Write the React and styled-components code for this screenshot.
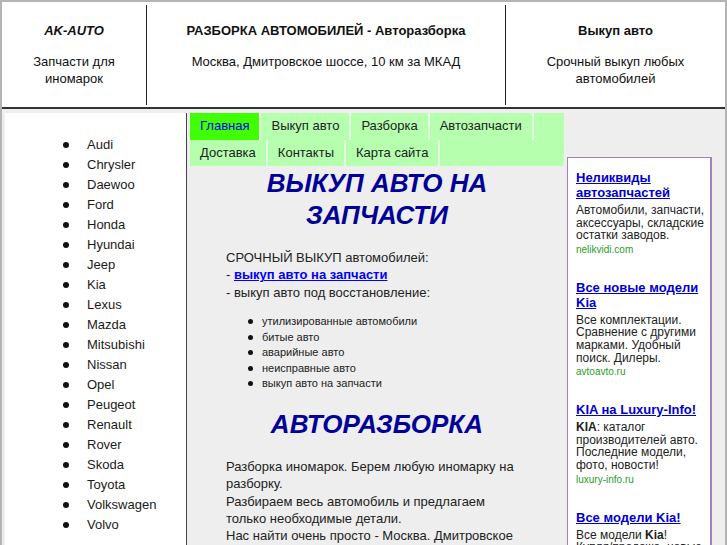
import React from "react";
import styled, { createGlobalStyle } from "styled-components";

const brands = [
    "Audi", "Chrysler", "Daewoo", "Ford", "Honda", "Hyundai", "Jeep", "Kia",
    "Lexus", "Mazda", "Mitsubishi", "Nissan", "Opel", "Peugeot", "Renault",
    "Rover", "Skoda", "Toyota", "Volkswagen", "Volvo",
];

const menu = [
    { title: "Главная", active: true },
    { title: "Выкуп авто" },
    { title: "Разборка" },
    { title: "Автозапчасти" },
    { title: "Доставка" },
    { title: "Контакты" },
    { title: "Карта сайта" },
];

const buyList = [
    "утилизированные автомобили",
    "битые авто",
    "аварийные авто",
    "неисправные авто",
    "выкуп авто на запчасти",
];

const App = () => {
    return (
        <>
            <GlobalStyle />
            <Page>
                <Header>
                    <HeaderCell>
                        <HeaderTitle $italic>AK-AUTO</HeaderTitle>
                        <HeaderText>Запчасти для<br />иномарок</HeaderText>
                    </HeaderCell>
                    <HeaderCell>
                        <HeaderTitle>РАЗБОРКА АВТОМОБИЛЕЙ - Авторазборка</HeaderTitle>
                        <HeaderText>Москва, Дмитровское шоссе, 10 км за МКАД</HeaderText>
                    </HeaderCell>
                    <HeaderCell $last>
                        <HeaderTitle>Выкуп авто</HeaderTitle>
                        <HeaderText>Срочный выкуп любых<br />автомобилей</HeaderText>
                    </HeaderCell>
                </Header>

                <Body>
                    <LeftCol>
                        <BrandList>
                            {brands.map((b) => (
                                <Brand key={b}>{b}</Brand>
                            ))}
                        </BrandList>
                    </LeftCol>

                    <Main>
                        <Nav>
                            {menu.map((m) => (
                                <NavItem key={m.title} $active={m.active}>{m.title}</NavItem>
                            ))}
                        </Nav>

                        <Heading $first>ВЫКУП АВТО НА ЗАПЧАСТИ</Heading>
                        <Content>
                            <Para>
                                СРОЧНЫЙ ВЫКУП автомобилей:<br />
                                - <MainLink href="#">выкуп авто на запчасти</MainLink><br />
                                - выкуп авто под восстановление:
                            </Para>
                            <SmallList>
                                {buyList.map((t) => (
                                    <SmallItem key={t}>{t}</SmallItem>
                                ))}
                            </SmallList>
                        </Content>

                        <Heading>АВТОРАЗБОРКА</Heading>
                        <Content>
                            <Para>
                                Разборка иномарок. Берем любую иномарку на разборку.<br />
                                Разбираем весь автомобиль и предлагаем только необходимые детали.<br />
                                Нас найти очень просто - Москва. Дмитровское шоссе, 10 км от МКАД.
                            </Para>
                        </Content>
                    </Main>

                    <Sidebar>
                        <AdBox>
                            <Ad>
                                <AdTitle href="#">Неликвиды автозапчастей</AdTitle>
                                <AdText>Автомобили, запчасти, аксессуары, складские остатки заводов.</AdText>
                                <AdUrl>nelikvidi.com</AdUrl>
                            </Ad>
                            <Ad>
                                <AdTitle href="#">Все новые модели Kia</AdTitle>
                                <AdText>Все комплектации. Сравнение с другими марками. Удобный поиск. Дилеры.</AdText>
                                <AdUrl>avtoavto.ru</AdUrl>
                            </Ad>
                            <Ad>
                                <AdTitle href="#">KIA на Luxury-Info!</AdTitle>
                                <AdText><b>KIA</b>: каталог производителей авто. Последние модели, фото, новости!</AdText>
                                <AdUrl>luxury-info.ru</AdUrl>
                            </Ad>
                            <Ad>
                                <AdTitle href="#">Все модели Kia!</AdTitle>
                                <AdText>Все модели <b>Kia</b>! <NoWrap>Купля/продажа,</NoWrap> новые и б/у автомобили.</AdText>
                                <AdUrl>auto.ru</AdUrl>
                            </Ad>
                        </AdBox>
                    </Sidebar>
                </Body>
            </Page>
        </>
    );
};

export default App;

const GlobalStyle = createGlobalStyle`
    html, body {
        margin: 0;
        padding: 0;
    }
    body {
        background: #eeeeee;
        font-family: "Liberation Sans", Arial, sans-serif;
        font-size: 13px;
        color: #222;
        overflow: hidden;
    }
`

const Page = styled.div`
    width: 727px;
    min-height: 545px;
    box-sizing: border-box;
    border: 2px solid #b4b4b4;
    border-bottom: none;
    background: #eeeeee;
`

const Header = styled.div`
    display: grid;
    grid-template-columns: 145px 359px 1fr;
    background: #fff;
    padding: 3px 0 2px;
    border-bottom: 2px solid #333;
`

const HeaderCell = styled.div`
    height: 100px;
    box-sizing: border-box;
    padding-top: 17px;
    text-align: center;
    color: #111;
    border-right: ${(p) => (p.$last ? "none" : "1px solid #222")};
`

const HeaderTitle = styled.div`
    font-weight: bold;
    font-style: ${(p) => (p.$italic ? "italic" : "normal")};
    line-height: 17px;
`

const HeaderText = styled.div`
    margin-top: 14px;
    line-height: 17px;
`

const Body = styled.div`
    display: flex;
    padding: 4px 0 0 3px;
`

const LeftCol = styled.div`
    width: 181px;
    min-height: 640px;
    background: #fff;
    border-right: 1px solid #444;
    padding-top: 22px;
    box-sizing: content-box;
`

const BrandList = styled.ul`
    list-style: none;
    margin: 0;
    padding: 0 0 0 58px;
`

const Brand = styled.li`
    display: flex;
    align-items: center;
    line-height: 20px;
    color: #1a1a1a;

    &::before {
        content: "";
        width: 6px;
        height: 6px;
        border-radius: 50%;
        background: #111;
        margin-right: 18px;
    }
`

const Main = styled.div`
    width: 374px;
    margin-left: 3px;
`

const Nav = styled.div`
    display: flex;
    flex-wrap: wrap;
    background: #b5ffae;
`

const NavItem = styled.div`
    padding: 0 10px;
    line-height: 26.5px;
    border-right: 2px solid #e6ffe2;
    background: ${(p) => (p.$active ? "#3fff00" : "transparent")};
    color: ${(p) => (p.$active ? "#0000ee" : "#222")};
    cursor: pointer;
`

const Heading = styled.h1`
    margin: ${(p) => (p.$first ? "0" : "16px 0 0")};
    padding-top: ${(p) => (p.$first ? "1px" : "0")};
    padding-left: 50px;
    padding-right: 50px;
    font-size: 26px;
    line-height: 32px;
    font-style: italic;
    font-weight: bold;
    color: #000099;
    text-align: center;
`

const Content = styled.div`
    padding: 0 36px;
`

const Para = styled.p`
    margin: 18px 0 0;
    line-height: 17.4px;
`

const MainLink = styled.a`
    color: #0000ff;
    font-weight: bold;
`

const SmallList = styled.ul`
    list-style: none;
    margin: 13px 0 0;
    padding: 0 0 0 22px;
`

const SmallItem = styled.li`
    display: flex;
    align-items: center;
    font-size: 11px;
    line-height: 15.5px;

    &::before {
        content: "";
        width: 5px;
        height: 5px;
        border-radius: 50%;
        background: #111;
        margin-right: 9px;
    }
`

const Sidebar = styled.div`
    flex: 1;
    padding: 44px 0 0 3px;
`

const AdBox = styled.div`
    width: 145px;
    box-sizing: border-box;
    background: #fff;
    border: 1px solid #a283b8;
    border-right-width: 2px;
    padding: 12px 3px 20px 8px;
`

const Ad = styled.div`
    margin-bottom: 24px;
`

const AdTitle = styled.a`
    display: block;
    font-size: 13px;
    font-weight: bold;
    line-height: 15px;
    color: #0000d0;
    text-decoration: underline;
    margin-bottom: 4px;
`

const AdText = styled.div`
    font-size: 12px;
    line-height: 12.6px;
    color: #222;
`

const NoWrap = styled.span`
    white-space: nowrap;
`

const AdUrl = styled.div`
    font-size: 10px;
    line-height: 13px;
    margin-top: 1px;
    color: #2a9d2a;
`
